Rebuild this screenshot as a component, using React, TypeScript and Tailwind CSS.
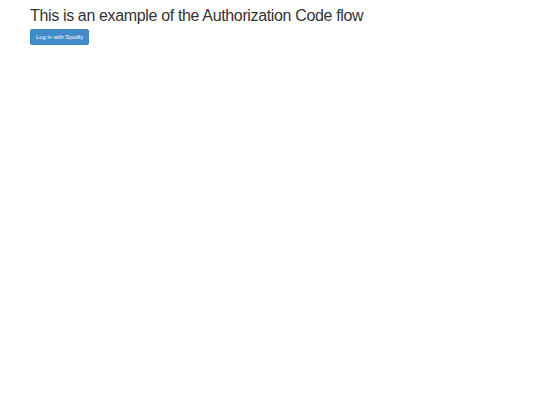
export default function App() {
  return (
    <div className="min-h-screen bg-white font-['Liberation_Sans',Arial,sans-serif] text-[#333]">
      <div className="flex flex-col items-start px-[30px] pt-[7px]">
        <h1 className="text-[16px] leading-[18px] font-normal tracking-[-0.35px]">This is an example of the Authorization Code flow</h1>
        <button className="mt-[4px] h-[16px] rounded-[2px] border border-[#3f86c6] bg-[#428bca] px-[5px] text-[5.8px] leading-[14px] text-white">
          Log in with Spotify
        </button>
      </div>
    </div>
  )
}
